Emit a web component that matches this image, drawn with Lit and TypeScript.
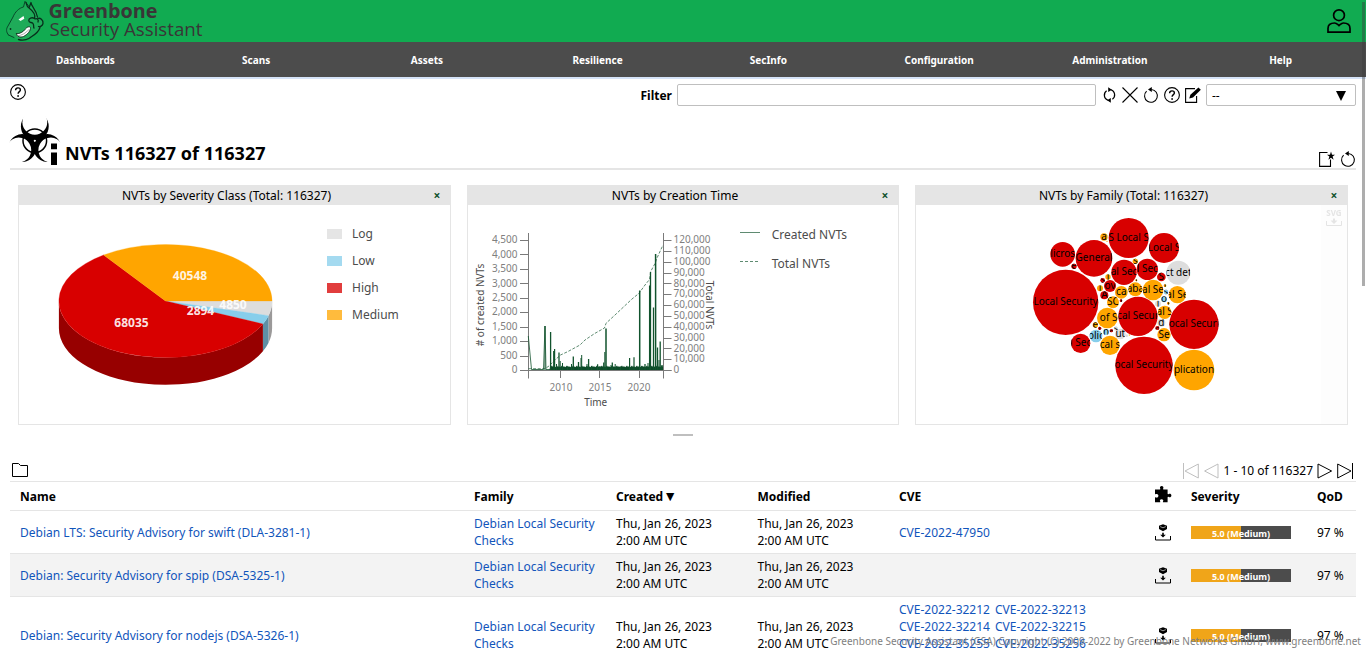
import { LitElement, html, svg, css } from "lit";
import { customElement } from "lit/decorators.js";

const NAV = ["Dashboards", "Scans", "Assets", "Resilience", "SecInfo", "Configuration", "Administration", "Help"];

const ROWS = [
  { name: "Debian LTS: Security Advisory for swift (DLA-3281-1)", cves: [["CVE-2022-47950"]] },
  { name: "Debian: Security Advisory for spip (DSA-5325-1)", cves: [] as string[][] },
  {
    name: "Debian: Security Advisory for nodejs (DSA-5326-1)",
    cves: [
      ["CVE-2022-32212", "CVE-2022-32213"],
      ["CVE-2022-32214", "CVE-2022-32215"],
      ["CVE-2022-35255", "CVE-2022-35256"],
      ["CVE-2022-43548"],
    ],
  },
];

/* ---------- icons ---------- */
const helpIcon = html`<svg class="icon" width="16" height="16" viewBox="0 0 16 16">
  <circle cx="8" cy="8" r="7.4" fill="none" stroke="#000" stroke-width="1.1" />
  <path d="M5.6 6.2C5.6 4.8 6.6 3.9 8 3.9S10.4 4.8 10.4 6C10.4 7.6 8.1 7.7 8.1 9.8" fill="none" stroke="#000" stroke-width="1.4" />
  <rect x="7.3" y="11.2" width="1.6" height="1.6" />
</svg>`;
const resetIcon = html`<svg class="icon" width="16" height="16" viewBox="0 0 16 16">
  <path d="M3.6 4.2A6.4 6.4 0 1 0 8.4 2.500" fill="none" stroke="#000" stroke-width="1.1" />
  <path d="M8.800 0V5L5 2.600Z" />
</svg>`;
const refreshIcon = html`<svg class="icon" width="14" height="16" viewBox="0 0 14 16">
  <path d="M5 13.300A5.400 5.400 0 0 1 3.600 3.800M8 2.700A5.400 5.400 0 0 1 9.400 12.200" fill="none" stroke="#000" stroke-width="1.2" />
  <path d="M5.200 .300V5.100L8.900 2.700ZM7.800 10.900V15.700L4.100 13.300Z" />
</svg>`;
const closeIcon = html`<svg class="icon" width="16" height="16" viewBox="0 0 16 16">
  <path d="M.5 .5L15.5 15.5M15.5 .5L.5 15.5" stroke="#000" stroke-width="1.1" />
</svg>`;
const editIcon = html`<svg class="icon" width="16" height="16" viewBox="0 0 16 16">
  <path d="M10 1.6H.6V15.4H11.6V9" fill="none" stroke="#000" stroke-width="1.1" />
  <path d="M4.2 11.6L5.4 7.8L13.4 .6L15.8 2.8L8 10.4Z" />
</svg>`;
const newIcon = html`<svg class="icon" width="16" height="16" viewBox="0 0 16 16">
  <path d="M8.5 1.5H.6V15.4H11.5V8.6" fill="none" stroke="#000" stroke-width="1.1" />
  <path d="M12 .6L13 3.8H16L13.6 5.6L14.6 8.8L12 6.8L9.4 8.8L10.4 5.6L8 3.8H11Z" />
</svg>`;
const userIcon = html`<svg width="26" height="26" viewBox="0 0 26 26" fill="none" stroke="#000" stroke-width="1.7">
  <circle cx="13" cy="7.2" r="5.4" />
  <path d="M2 24.2V20.5C2 17 4.5 15 8.6 15C10.5 15 11.3 16.2 13 17.6C14.7 16.2 15.5 15 17.4 15C21.5 15 24 17 24 20.5V24.2Z" />
</svg>`;
const folderIcon = html`<svg class="icon folder" width="16" height="14" viewBox="0 0 16 14">
  <path d="M.5 .5H6.5L8.5 2.5H15.5V13.5H.5Z" fill="none" stroke="#000" />
</svg>`;
const puzzleIcon = html`<svg class="icon" width="17" height="17" viewBox="0 0 17 17">
  <path d="M0 3.4H4.8C5.6 3.4 5.4 2.8 5.1 2.2C4.6 1 5.4 0 6.7 0S8.8 1 8.3 2.2C8 2.8 7.8 3.4 8.6 3.4H12.6V7.4C12.6 8.4 13.2 8.2 13.8 7.9C15 7.3 16.4 8 16.4 9.4S15 11.6 13.8 11C13.2 10.7 12.6 10.6 12.6 11.5V16.3H8.4C7.6 16.3 7.9 15.6 8.2 15C8.6 14 7.8 13.2 6.6 13.2S4.6 14 5 15C5.3 15.6 5.6 16.3 4.8 16.3H0V12C0 11 .6 11.2 1.2 11.5C2.2 12 3.4 11.2 3.4 9.8S2.2 7.6 1.2 8.1C.6 8.4 0 8.6 0 7.6Z" />
</svg>`;
const fixIcon = html`<svg class="icon" width="16" height="17" viewBox="0 0 16 17">
  <path d="M.5 12V16H15.5V12" fill="none" stroke="#000" />
  <path d="M8 .300L12 1.700V5L8 7.300L4 5V1.700Z" />
  <path d="M5.200 2.600L8 3.800L10.800 2.600" fill="none" stroke="#fff" stroke-width=".6" />
  <path d="M7.2 8.800H8.8V10.800H10.8L8 13.600L5.2 10.800H7.2Z" />
</svg>`;
const firstIcon = html`<svg width="16" height="16" viewBox="0 0 16 16" fill="none" stroke="#bfbfbf"><path d="M.5 0V16M15.3 1V15L2 8Z" /></svg>`;
const prevIcon = html`<svg width="16" height="16" viewBox="0 0 16 16" fill="none" stroke="#bfbfbf"><path d="M15 1V15L1.6 8Z" /></svg>`;
const nextIcon = html`<svg width="16" height="16" viewBox="0 0 16 16" fill="none" stroke="#000"><path d="M1 1V15L14.6 8Z" /></svg>`;
const lastIcon = html`<svg width="16" height="16" viewBox="0 0 16 16" fill="none" stroke="#000"><path d="M15.5 0V16M.7 1V15L14 8Z" /></svg>`;

/* three crescents at 120 degrees, joined by a ring */
const LOBES = [0, 120, 240];
const nvtIcon = html`<svg class="icon" width="50" height="48" viewBox="0 0 50 48">
  <mask id="lobes" maskUnits="userSpaceOnUse" x="-5" y="-10" width="60" height="70">
    <rect x="-5" y="-10" width="60" height="70" fill="#fff" />
    ${LOBES.map((a) => svg`<circle cx="24.800" cy="4.300" r="12.400" transform="rotate(${a} 24.800 22.800)" fill="#000"/>`)}
    <circle cx="24.800" cy="22.800" r="1" fill="#000" />
  </mask>
  <g mask="url(#lobes)">${LOBES.map((a) => svg`<circle cx="24.800" cy="8.400" r="13.900" transform="rotate(${a} 24.800 22.800)"/>`)}</g>
  <circle cx="24.800" cy="22.800" r="11.800" fill="none" stroke="#000" stroke-width="1.500" />
  <path d="M40 24H48V47H40Z" fill="#fff" />
  <path d="M41 25.500H47V31.300H41ZM41 34.500H47V47H41Z" />
</svg>`;

const logo = html`<svg class="icon" width="210" height="42" viewBox="0 0 210 42">
  <g stroke-linejoin="round" stroke-linecap="round">
    <path d="M23.500 7L25 1.300L29 6.500L31 2L33.500 6C36.500 8.500 38.500 13 38.600 17.500C42 17 44 20 43.500 24C43 27 41 28 40 29C38 34 33 36 30 38C26 41 21 41 18.500 39.500L8.500 35C6 32 6 29 8 26L13 17C15 12 19 8 23.500 7Z" fill="#1fab59" />
    <path d="M8.500 35C6 32 6 29 8 26L13 17C15 12 19 8 23.500 7L25 1.300L29 6.500M8.500 35L14 37.500" fill="none" stroke="#08492a" stroke-width="1" />
    <path d="M26 2.500C27 6 27 7 29 8L31 2.500C31 6 36 9 37.500 17M29 8C33 11 36 14 34.500 18.500C32 17 28.500 18 28.800 20.800C29 23 32 22 33 23.500C34.500 26 33 27 34 28M38 18.500C40 17.500 43.500 20 43 23.500C42.500 26 40 27 38.500 26.500M35 19C37 18 39 19.500 38 22M18.500 39.500C24 41 29 39 31 37C36 34 39 31 40 27.500" fill="none" stroke="#06301b" stroke-width="1.300" />
    <path d="M16.500 33.800C20 33.800 23 32 25 29.500C26.500 27 29.500 26 30.500 27.500C31 30.500 27.500 34.500 23.500 36.500C20 37.800 17 36.800 16.500 33.800Z" fill="#fff" stroke="#0b2d1b" stroke-width=".9" />
    <path d="M17.500 35.800C22 35.500 26 33 29 29.500" fill="none" stroke="#555" stroke-width=".5" />
    <path d="M18.500 19.500L23.500 16L24.300 18.800L20.500 21Z" fill="#fff" />
    <circle cx="10.500" cy="29" r=".9" fill="#06301b" />
  </g>
  <text x="48.500" y="17.900" class="logo-a" textLength="109" lengthAdjust="spacingAndGlyphs">Greenbone</text>
  <text x="49.500" y="35.500" class="logo-b" textLength="153" lengthAdjust="spacingAndGlyphs">Security Assistant</text>
</svg>`;

/* ---------- severity pie ---------- */
const CX = 165.5, CY = 301, RX = 106.6, RY = 56.5, DEPTH = 27.3;
const TOTAL = 116327;
const SLICES = [
  { label: "Log", value: 4850, top: "#dddddd", side: "#9b9999", tx: 233, ty: 309 },
  { label: "Low", value: 2894, top: "#87ceeb", side: "#5e90a5", tx: 200.5, ty: 315 },
  { label: "High", value: 68035, top: "#d80000", side: "#970000", tx: 131.5, ty: 327 },
  { label: "Medium", value: 40548, top: "#ffa500", side: "#b27300", tx: 190, ty: 280 },
];
const pt = (a: number, dy = 0) => `${(CX + RX * Math.cos(a)).toFixed(2)} ${(CY + dy + RY * Math.sin(a)).toFixed(2)}`;

function pieChart() {
  let a = 0;
  const sides: unknown[] = [], tops: unknown[] = [];
  for (const s of SLICES) {
    const b = a + (s.value / TOTAL) * Math.PI * 2;
    if (a < Math.PI) {
      const e = Math.min(b, Math.PI);
      sides.push(svg`<path fill=${s.side} d="M${pt(a)}A${RX} ${RY} 0 0 1 ${pt(e)}L${pt(e, DEPTH)}A${RX} ${RY} 0 0 0 ${pt(a, DEPTH)}Z"/>`);
    }
    tops.push(svg`<path fill=${s.top} stroke=${s.top} stroke-width=".3" d="M${CX} ${CY}L${pt(a)}A${RX} ${RY} 0 ${b - a > Math.PI ? 1 : 0} 1 ${pt(b)}Z"/>`);
    a = b;
  }
  return html`<svg class="chart" width="431" height="219" viewBox="19 205 431 219">
    ${sides}${tops}
    ${SLICES.map((s) => svg`<text class="slice" x=${s.tx} y=${s.ty}>${s.value}</text>`)}
    ${SLICES.map((s, i) => svg`<rect x="327" y=${229 + i * 27} width="15" height="10" fill=${s.top} opacity=".76"/>
      <text class="legend" x="352" y=${238.300 + i * 27}>${s.label}</text>`)}
  </svg>`;
}

/* ---------- creation time chart ---------- */
const SPIKES: [number, number, number][] = [
  [545, 326, 1], [550.600, 332, 1.300], [553.700, 351, 1.200], [554.600, 349, 1.200], [559, 352.500, 1.300], [560.200, 361, 1],
  [556.500, 364, 1], [562.500, 363, 1], [567.500, 366.500, 1], [573.300, 356.500, 1.300], [571.500, 364, 1], [578.500, 362, 1.300],
  [581, 358, 1], [581.700, 355, 1], [588.600, 359, 1.300], [587, 364, 1], [591.500, 366, 1], [597.600, 364.300, 1.200], [600, 366, 1],
  [603.700, 362.500, 1.200], [606, 328.500, 1.500], [604.800, 352, 1], [612.300, 362.500, 1.300], [611, 365, 1], [615.200, 364, 1],
  [620.500, 366.500, 1], [629.600, 358, 1.200], [634, 357.300, 1.200], [639.700, 290.500, 1.500], [642, 366, 1], [645, 364, 1.300],
  [648, 363, 1], [649.600, 285.500, 1.300], [650.500, 272, 1.300], [653.500, 307.500, 1.300], [655.600, 254, 1.500], [657.500, 347.500, 1.300],
  [659, 360, 1], [660.200, 341.500, 1.300], [662, 365, 1.300],
];
const baseNoise = () => {
  let d = "M549.500 370";
  for (let x = 550, i = 0; x <= 663; x += 1, i++) d += `L${x} ${(367.300 - ((i * 7) % 5) * 0.450).toFixed(1)}`;
  return d + "L663 370Z";
};

function timeChart() {
  const left = [0, 500, 1000, 1500, 2000, 2500, 3000, 3500, 4000, 4500];
  const right = Array.from({ length: 13 }, (_, i) => i * 10000);
  return html`<svg class="chart" width="430" height="219" viewBox="468 205 430 219">
    <path class="axis" d="M528.500 233V378.500M663.500 233V378.500M520 370.500H671.500M560.500 370V378M599.500 370V378M639.500 370V378" />
    ${left.map((v, i) => svg`<path class="axis" d="M520 ${Math.round(370 - i * 14.440) + 0.500}H528"/>
      <text class="tick end" x="517.500" y=${373.300 - i * 14.460}>${v.toLocaleString("en-US")}</text>`)}
    ${right.map((v, i) => svg`<path class="axis" d="M664 ${Math.round(370 - i * 10.830) + 0.500}H671.500"/>
      <text class="tick" x="673.500" y=${373.300 - i * 10.850}>${v.toLocaleString("en-US")}</text>`)}
    ${[[561, 2010], [600, 2015], [639, 2020]].map(([x, y]) => svg`<text class="tick mid" x=${x} y="391">${y}</text>`)}
    <text class="axis-label mid" x="595.700" y="406">Time</text>
    <text class="axis-label mid" transform="translate(484 305) rotate(-90)">#${" "}of created NVTs</text>
    <text class="axis-label mid" transform="translate(706 305) rotate(90)">Total NVTs</text>
    <path d="M528.300 336L531.500 369.500H543.500L545 326L546 369.500H550" fill="none" stroke="#11532d" stroke-width=".8" />
    <path d=${baseNoise()} fill="#0c4a28" />
    ${SPIKES.map(([x, y, w]) => svg`<path d="M${x} 370V${y}" stroke="#11532d" stroke-width=${w}/>`)}
    <path d="M528.500 368.700H545L549 366L555 360L560.500 355L568 351.500L580 345L585 340L595 333.300L604.500 328L606 323.300L615 315L632 299L639 293.300L645 285L649.500 279.500L650.700 271.500L655 263.500L657 258L663 245" fill="none" stroke="#11532d" stroke-width=".8" stroke-dasharray="3 1.600" opacity=".85" />
    <path d="M740 232.500H760" stroke="#5f8b71" stroke-width="1" />
    <path d="M740 261.500H760" stroke="#5f8b71" stroke-width="1" stroke-dasharray="3 2" />
    <text class="legend" x="771.700" y="238.800">Created NVTs</text>
    <text class="legend" x="771.700" y="267.800">Total NVTs</text>
  </svg>`;
}

/* ---------- family bubbles: x, y, r in thirds of a pixel ---------- */
const R = "#d80000", O = "#ffa500", G = "#dddddd", B = "#87ceeb";
const BUBBLES: [number, number, number, string, string][] = [
  [137, 292, 98, R, "Local Security"], [372, 481, 86, R, "ocal Security"], [522, 358, 74, R, "ocal Securi"],
  [354, 334, 59, R, "cal Secur"], [522, 495, 61, O, "plication"], [326, 99, 60, R, "S Local S"],
  [222, 160, 55, R, "General"], [432, 129, 45, R, "Local S"], [128, 148, 37, R, "licros"], [312, 202, 38, R, "al Sec"],
  [382, 193, 32, R, "l Sec"], [475, 203, 36, G, "ct det"], [399, 255, 31, O, "al Se"], [472, 269, 26, O, "al Se"],
  [262, 339, 31, O, "\u00a0of S"], [270, 421, 29, O, "cal s"], [182, 415, 29, R, "l Sec"], [346, 253, 21, O, "aba"],
  [304, 262, 19, O, "ca"], [270, 243, 18, R, "ov"], [279, 292, 18, O, "SC"], [434, 322, 20, O, "al S"],
  [432, 389, 20, O, "Se"], [228, 393, 19, B, "olic"], [424, 353, 12, G, "d"], [301, 387, 16, G, "ut"],
  [252, 96, 11, O, "a"], [253, 271, 12, R, "A"], [424, 216, 13, R, "S"], [264, 216, 8, O, "l"],
  [248, 226, 7, R, "s"], [240, 250, 9, O, "l"], [162, 184, 8, R, "e"], [346, 169, 8, O, "s"],
  [432, 283, 9, B, "o"], [438, 261, 7, B, "s"], [414, 296, 9, G, "l"], [435, 242, 4, O, "i"],
  [226, 360, 8, O, "e"], [239, 370, 5, R, "i"], [258, 381, 9, B, "n"], [274, 377, 5, R, "a"], [288, 371, 6, G, "s"],
  [412, 369, 6, R, "a"], [303, 287, 4, R, "i"], [445, 295, 4, O, "i"], [349, 226, 3, O, "i"], [261, 109, 2, O, ""],
  [320, 392, 4, G, "."], [328, 390, 2, O, ""],
];

function bubbleChart() {
  return html`<svg class="chart" width="431" height="219" viewBox="916 205 431 219">
    <rect x="1321" y="205" width="26" height="219" fill="#fdfdfd" />
    <g opacity=".9"><text class="svg-label" x="1334" y="216">SVG</text>
    <path d="M1326.500 221V225.500H1341.500V221" fill="none" stroke="#e2e2e2" />
    <path d="M1333 218.500H1335V220.500H1337.500L1334 224L1330.500 220.500H1333Z" fill="#e2e2e2" /></g>
    ${BUBBLES.map(([x, y, r, c, t], i) => {
      const px = 1020 + x / 3, py = 205 + y / 3, pr = r / 3;
      return svg`<clipPath id=${"c" + i}><circle cx=${px} cy=${py} r=${pr}/></clipPath>
        <circle cx=${px} cy=${py} r=${pr} fill=${c}/>
        <g clip-path=${`url(#c${i})`}><text class="bubble" x=${px} y=${py + 3}>${t}</text></g>`;
    })}
  </svg>`;
}

@customElement("app-root")
export class AppRoot extends LitElement {
  static styles = css`
    :host { display: block; position: relative; height: 650px; overflow: hidden; background: #fff; color: #000; font: 12px/17px "Noto Sans", "Open Sans", sans-serif; }
    * { box-sizing: border-box; }
    svg { display: block; flex: none; }
    .icon { overflow: visible; }
    header { height: 42px; background: #11ab51; display: flex; justify-content: space-between; align-items: center; padding-right: 14px; }
    .logo-a { font: bold 20px "Open Sans", sans-serif; fill: #393637; }
    .logo-b { font: 18.500px "Open Sans", sans-serif; fill: #393637; }
    nav { height: 37px; display: flex; background: #4c4c4c; border-bottom: 2px solid #d5e3f8; }
    nav a { flex: 1; text-align: center; color: #fff; font: bold 10px/36px "Noto Sans", sans-serif; }
    main { padding: 5px 10px 0; }
    .toolbar { display: flex; justify-content: space-between; height: 40px; }
    .filter { display: flex; align-items: center; height: 22px; }
    .filter b { margin-right: 5px; }
    .input { width: 419px; height: 22px; border: 1px solid #bfbfbf; border-radius: 2px; margin-right: 7px; }
    .tools { display: flex; align-items: center; gap: 5px; margin-right: 5px; }
    .select { width: 150px; height: 22px; border: 1px solid #bfbfbf; border-radius: 2px; display: flex; align-items: center; justify-content: space-between; padding: 1px 9px 0 5px; }
    .title { height: 46px; border-bottom: 2px solid #e5e5e5; display: flex; align-items: flex-end; margin-bottom: 15px; }
    .title > svg { margin-bottom: 2px; }
    .title h1 { margin: 0 auto 0 5px; font: bold 18px/24px "Noto Sans", sans-serif; padding-bottom: 3px; }
    .title .actions { display: flex; gap: 5px; padding-bottom: 1px; }
    .cards { display: grid; grid-template-columns: 433px 432px 433px; gap: 16px; padding: 0 8px; }
    .card { height: 240px; border: 1px solid #e5e5e5; border-top: 0; }
    .card h2 { margin: 0 -1px; height: 20px; background: #e5e5e5; font: 12px/22px "Noto Sans", sans-serif; display: flex; text-align: center; }
    .card h2 span { flex: 1; padding-left: 12px; }
    .card h2 b { width: 28px; color: #11532d; }
    .handle { width: 20px; height: 2px; background: #bfbfbf; margin: 9px auto 25px; }
    .pager { display: flex; align-items: center; justify-content: space-between; height: 20px; padding: 0 3px 1px 2px; }
    .pager div { display: flex; align-items: center; gap: 4px; }
    .folder { margin-bottom: 1px; }
    .row { display: grid; grid-template-columns: 454px 142px 141.500px 141.500px 256px 36px 126px 49px; border-bottom: 1px solid #e5e5e5; align-items: center; padding: 4px 0; min-height: 43px; }
    .row > * { padding: 0 10px; }
    .row.head { border-top: 1px solid #e5e5e5; min-height: 30px; padding: 0; font-weight: bold; }
    .row.even { background: #f3f3f3; }
    .head .puzzle { padding-bottom: 4px; }
    .arrow { font-size: 14px; line-height: 14px; margin-left: -3px; }
    .link { color: #1155bb; }
    .pair { display: flex; gap: 5px; }
    .bar { width: 100px; height: 13px; display: flex; background: #4c4c4c; position: relative; }
    .bar i { background: #f0a519; }
    .bar span { position: absolute; inset: 0; text-align: center; color: #fff; font: bold 9px/15px "Noto Sans", sans-serif; }
    .nowrap { white-space: nowrap; }
    footer { position: absolute; right: 5px; bottom: 0; color: #7f7f7f; font-size: 10px; line-height: 18px; white-space: nowrap; }
    .scroll { position: absolute; right: 1px; top: 2px; width: 3px; height: 284px; background: rgba(60, 60, 60, .42); }
    .slice { font: bold 12px "Noto Sans", sans-serif; fill: #fff; fill-opacity: .9; text-anchor: middle; }
    .legend { font: 12px "Noto Sans", sans-serif; fill: #4c4c4c; }
    .axis { stroke: #7a7a7a; fill: none; stroke-width: 1; }
    .tick { font: 10px "Noto Sans", sans-serif; fill: #7f7f7f; }
    .axis-label { font: 10px "Noto Sans", sans-serif; fill: #4c4c4c; }
    .end { text-anchor: end; }
    .mid { text-anchor: middle; }
    .bubble { font: 10px "Noto Sans", sans-serif; text-anchor: middle; }
    .svg-label { font: bold 8px "Noto Sans", sans-serif; text-anchor: middle; fill: #e2e2e2; }
  `;

  card(title: string, chart: unknown) {
    return html`<section class="card"><h2><span>${title}</span><b>×</b></h2>${chart}</section>`;
  }

  render() {
    return html`
      <header>${logo}${userIcon}</header>
      <nav>${NAV.map((n) => html`<a>${n}</a>`)}</nav>
      <main>
        <div class="toolbar">
          ${helpIcon}
          <div class="filter">
            <b>Filter</b><div class="input"></div>
            <div class="tools">${refreshIcon}${closeIcon}${resetIcon}${helpIcon}${editIcon}</div>
            <div class="select"><span>--</span><svg width="10" height="10" viewBox="0 0 10 10"><path d="M0 0H10L5 10Z" /></svg></div>
          </div>
        </div>
        <div class="title">${nvtIcon}<h1>NVTs 116327 of 116327</h1><div class="actions">${newIcon}${resetIcon}</div></div>
        <div class="cards">
          ${this.card("NVTs by Severity Class (Total: 116327)", pieChart())}
          ${this.card("NVTs by Creation Time", timeChart())}
          ${this.card("NVTs by Family (Total: 116327)", bubbleChart())}
        </div>
        <div class="handle"></div>
        <div class="pager">${folderIcon}<div>${firstIcon}${prevIcon}<span>1 - 10 of 116327</span>${nextIcon}${lastIcon}</div></div>
        <div class="row head">
          <span>Name</span><span>Family</span><span class="nowrap">Created <span class="arrow">▼</span></span><span>Modified</span><span>CVE</span>
          <span class="puzzle">${puzzleIcon}</span><span>Severity</span><span>QoD</span>
        </div>
        ${ROWS.map((r, i) => html`<div class="row ${i % 2 ? "even" : ""}">
          <span class="link">${r.name}</span>
          <span class="link">Debian Local Security<br />Checks</span>
          <span class="nowrap">Thu, Jan 26, 2023<br />2:00 AM UTC</span>
          <span class="nowrap">Thu, Jan 26, 2023<br />2:00 AM UTC</span>
          <div class="link">${r.cves.map((p) => html`<div class="pair">${p.map((c) => html`<span>${c}</span>`)}</div>`)}</div>
          <span>${fixIcon}</span>
          <div><div class="bar"><i style="width:50%"></i><span>5.0 (Medium)</span></div></div>
          <span class="nowrap">97 %</span>
        </div>`)}
      </main>
      <footer>Greenbone Security Assistant (GSA) Copyright (C) 2009-2022 by Greenbone Networks GmbH, www.greenbone.net</footer>
      <div class="scroll"></div>
    `;
  }
}
